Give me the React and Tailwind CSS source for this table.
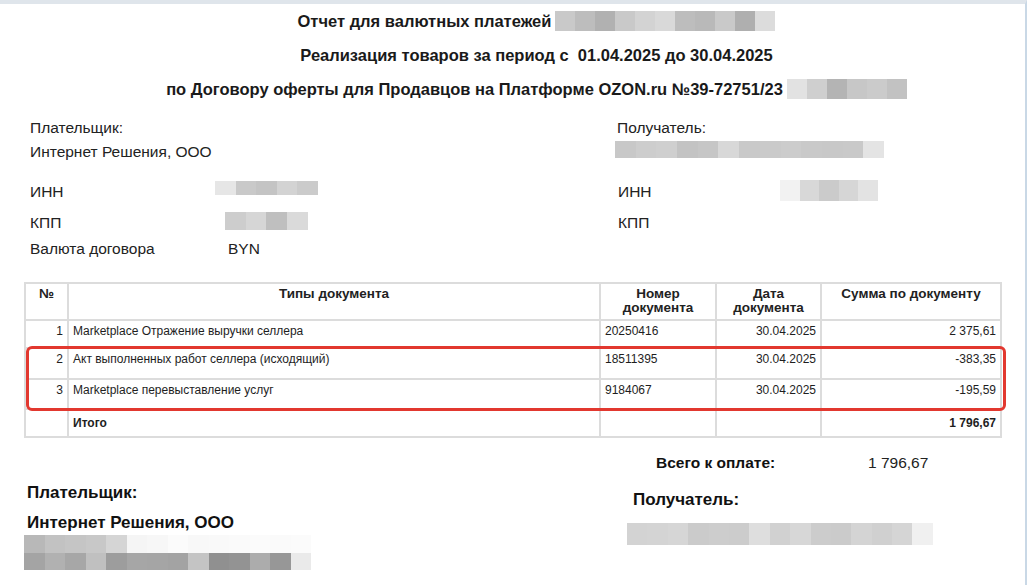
const font = { fontFamily: '"Liberation Sans", Arial, sans-serif' }

function Mosaic({ cells, cell = 20, h = 20, className = '' }) {
  return (
    <div className={`flex ${className}`}>
      {cells.map((c, i) => (
        <div key={i} style={{ width: cell, height: h, background: c }} />
      ))}
    </div>
  )
}

const rows = [
  { n: '1', type: 'Marketplace Отражение выручки селлера', num: '20250416', date: '30.04.2025', sum: '2 375,61', h: 'h-[28px]' },
  { n: '2', type: 'Акт выполненных работ селлера (исходящий)', num: '18511395', date: '30.04.2025', sum: '-383,35', h: 'h-[31px]' },
  { n: '3', type: 'Marketplace перевыставление услуг', num: '9184067', date: '30.04.2025', sum: '-195,59', h: 'h-[30px]' },
]

function DocTable() {
  const cell = 'border-2 border-[#dcdcdc] align-top px-[4px] pt-[3px]'
  const total = 'border-2 border-[#dcdcdc] align-top px-[4px] pt-[6px]'
  return (
    <div className="relative ml-[24px] w-[976px]">
      <table className="w-full table-fixed border-collapse text-[12px] leading-[14px] text-[#1e1e1e]">
        <colgroup>
          <col className="w-[43px]" />
          <col className="w-[532px]" />
          <col className="w-[116px]" />
          <col className="w-[105px]" />
          <col className="w-[180px]" />
        </colgroup>
        <thead>
          <tr className="h-[37px] text-[13.5px] leading-[14px] font-bold text-[#222]">
            <th className={`${cell} text-center`}>№</th>
            <th className={`${cell} text-center`}>Типы документа</th>
            <th className={`${cell} text-center`}>Номер<br />документа</th>
            <th className={`${cell} text-center`}>Дата<br />документа</th>
            <th className={`${cell} text-center`}>Сумма по документу</th>
          </tr>
        </thead>
        <tbody>
          {rows.map((r) => (
            <tr key={r.n} className={r.h}>
              <td className={`${cell} text-right`}>{r.n}</td>
              <td className={cell}>{r.type}</td>
              <td className={cell}>{r.num}</td>
              <td className={`${cell} text-right`}>{r.date}</td>
              <td className={`${cell} text-right`}>{r.sum}</td>
            </tr>
          ))}
          <tr className="h-[28px] font-bold">
            <td className={total}></td>
            <td className={total}>Итого</td>
            <td className={total}></td>
            <td className={total}></td>
            <td className={`${total} text-right`}>1 796,67</td>
          </tr>
        </tbody>
      </table>
      <div className="absolute left-[2px] top-[64px] h-[65px] w-[980px] rounded-[6px] border-[3px] border-[#e2382f]" />
    </div>
  )
}

export default function App() {
  return (
    <div
      style={font}
      className="h-[585px] w-[1027px] overflow-hidden border-t-4 border-r-2 border-t-[#dfe5eb] border-r-[#c9d8e6] bg-white text-[#222]"
    >
      <div className="pl-[48px] text-[16.5px] font-bold text-[#1a1a1a]">
        <div className="flex h-[34px] items-center justify-center gap-[4px]">
          <span>Отчет для валютных платежей</span>
          <Mosaic cell={20} h={20} cells={['#c9c9c9', '#bdbdbd', '#b1b1b1', '#c9c9c9', '#d3d3d3', '#d9d9d9', '#bdbdbd', '#b9b9b9', '#c9c9c9', '#afafaf', '#dcdcdc']} />
        </div>
        <div className="flex h-[34px] items-center justify-center">
          <span>Реализация товаров за период с&nbsp; 01.04.2025 до 30.04.2025</span>
        </div>
        <div className="flex h-[34px] items-center justify-center gap-[4px]">
          <span>по Договору оферты для Продавцов на Платформе OZON.ru №39-72751/23</span>
          <Mosaic cell={20} h={20} cells={['#e2e2e2', '#cfcfcf', '#b4b4b4', '#c7c7c7', '#cbcbcb', '#c2c2c2']} />
        </div>
      </div>

      <div className="mt-[10px] text-[15.5px] leading-[24px]">
        <div className="flex">
          <div className="w-[617px] pl-[30px]">Плательщик:</div>
          <div>Получатель:</div>
        </div>
        <div className="flex h-[24px] items-center">
          <div className="w-[615px] pl-[30px]">Интернет Решения, ООО</div>
          <Mosaic className="-mt-[6px]" cell={20.7} h={17} cells={['#c8c8c8', '#cdcdcd', '#cfcfcf', '#c3c3c3', '#c6c6c6', '#d8d8d8', '#c9c9c9', '#cacaca', '#cccccc', '#c9c9c9', '#c8c8c8', '#c9c9c9', '#e4e4e4']} />
        </div>
        <div className="mt-[16px] flex h-[24px] items-center">
          <div className="flex w-[618px] items-center pl-[30px]">
            <span className="w-[185px]">ИНН</span>
            <Mosaic className="-mt-[8px]" cell={20.6} h={14} cells={['#e6e6e6', '#c9c9c9', '#c4c4c4', '#d3d3d3', '#cbcbcb']} />
          </div>
          <span className="w-[162px]">ИНН</span>
          <Mosaic className="-mt-[4px]" cell={19.6} h={21} cells={['#f2f2f2', '#d8d8d8', '#cbcbcb', '#d6d6d6', '#e3e3e3']} />
        </div>
        <div className="mt-[7px] flex h-[24px] items-center">
          <div className="flex w-[618px] items-center pl-[30px]">
            <span className="w-[195px]">КПП</span>
            <Mosaic className="mt-[-4px]" cell={20.7} h={18} cells={['#cdcdcd', '#d6d6d6', '#bfbfbf', '#dadada']} />
          </div>
          <span>КПП</span>
        </div>
        <div className="mt-[2px] flex">
          <div className="flex w-[618px] pl-[30px]">
            <span className="w-[198px]">Валюта договора</span>
            <span>BYN</span>
          </div>
        </div>
      </div>

      <div className="mt-[21px]">
        <DocTable />
      </div>

      <div className="mt-[15px] flex h-[20px] items-center text-[15.5px]">
        <span className="ml-[656px] w-[212px] font-bold text-[#111]">Всего к оплате:</span>
        <span>1 796,67</span>
      </div>

      <div className="mt-[8px] flex text-[17px] font-bold text-[#111]">
        <div className="w-[627px] pl-[27px]">
          <div className="leading-[24px]">Плательщик:</div>
          <div className="mt-[6px] leading-[24px]">Интернет Решения, ООО</div>
          <Mosaic className="-ml-[3px]" cell={20.5} h={18} cells={['#b8b8b8', '#c2c2c2', '#c5c5c5', '#c8c8c8', '#d5d5d5', '#f5f5f5', '#f7f7f7', '#fbfbfb', '#f8f8f8', '#f9f9f9', '#fafafa', '#fbfbfb', '#fafafa', '#fbfbfb']} />
          <Mosaic className="-ml-[3px]" cell={20.5} h={17} cells={['#a4a4a4', '#b1b1b1', '#a7a7a7', '#c0c0c0', '#9d9d9d', '#a6a6a6', '#a5a5a5', '#a3a3a3', '#c4c4c4', '#909090', '#939393', '#acacac', '#979797', '#eaeaea']} />
        </div>
        <div className="pt-[7px]">
          <div className="pl-[6px] leading-[24px]">Получатель:</div>
          <Mosaic className="mt-[11px]" cell={20.4} h={22} cells={['#d3d3d3', '#d4d4d4', '#d6d6d6', '#cbcbcb', '#cdcdcd', '#cccccc', '#dedede', '#d1d1d1', '#d7d7d7', '#cccccc', '#cbcbcb', '#d4d4d4', '#d0d0d0', '#d5d5d5', '#f0f0f0']} />
        </div>
      </div>
    </div>
  )
}
